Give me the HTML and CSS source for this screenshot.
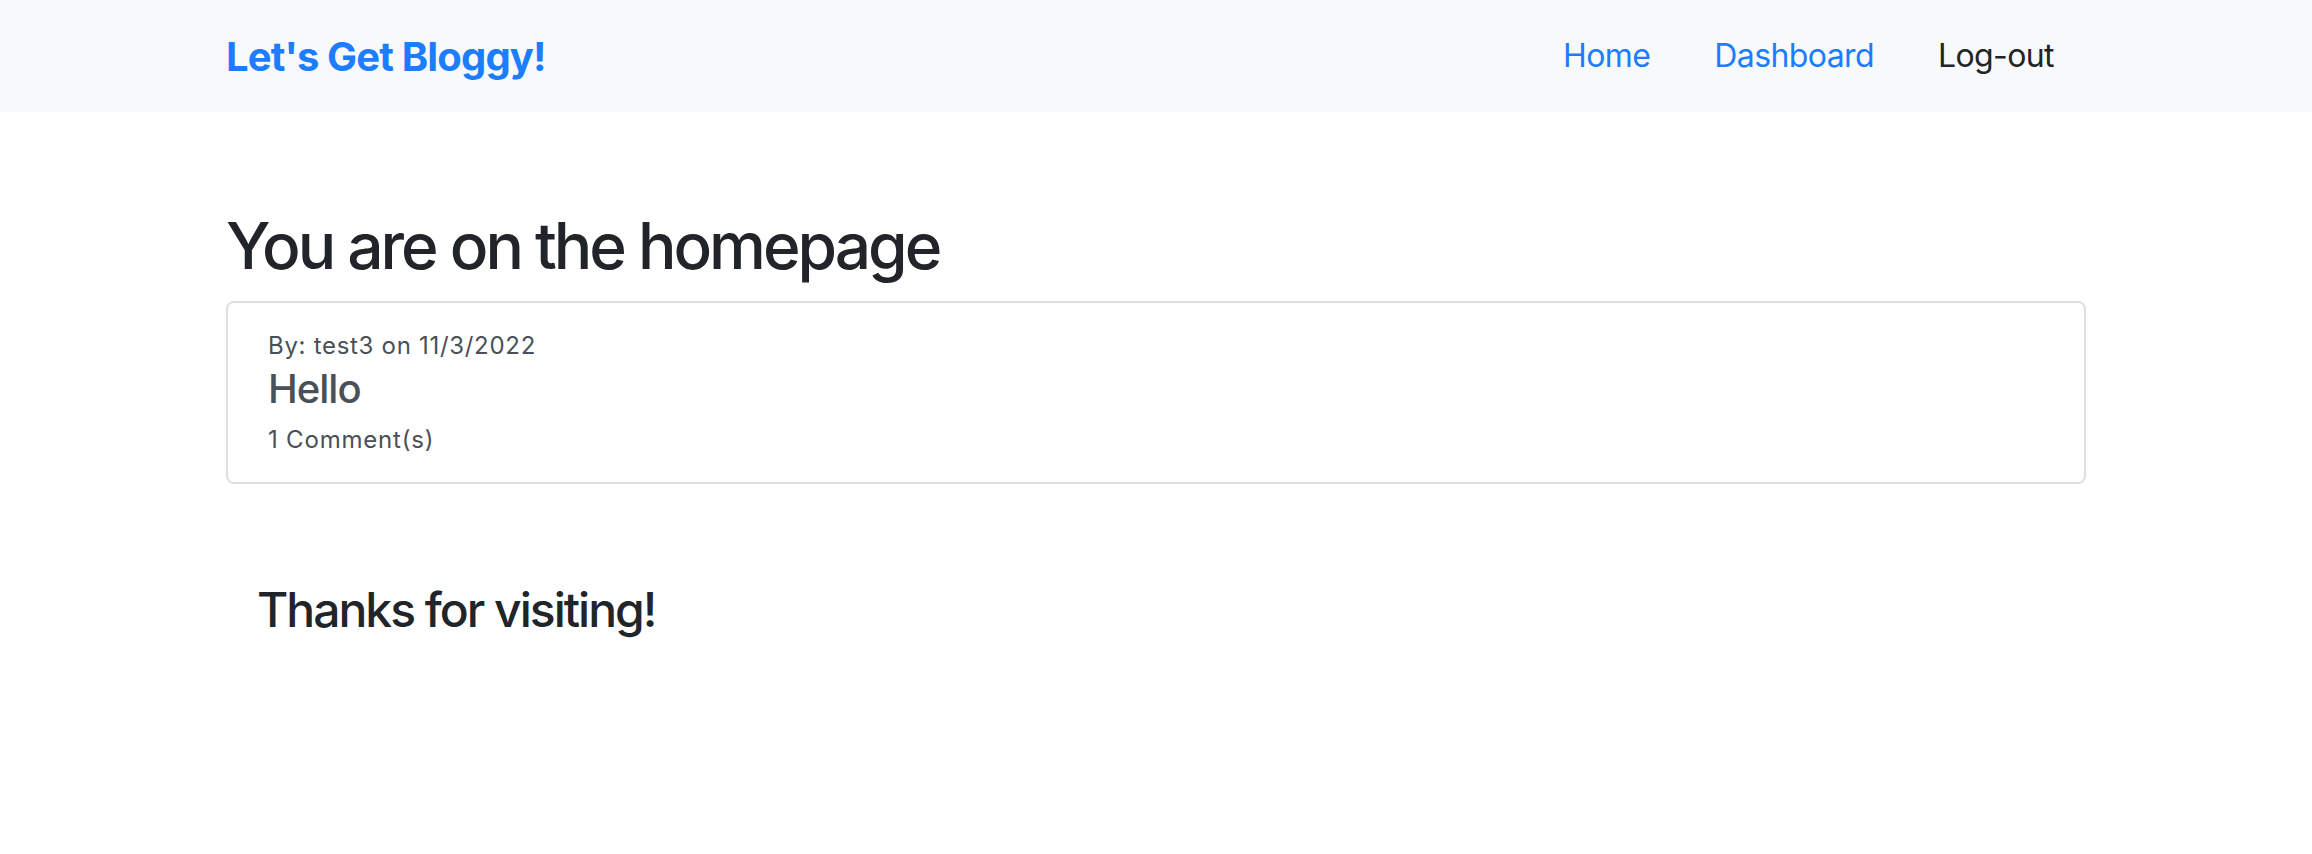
FILE: index.html
```html
<!DOCTYPE html>
<html lang="en">
<head>
<meta charset="utf-8">
<title>Let's Get Bloggy!</title>
<link rel="stylesheet" href="styles.css">
</head>
<body>
<nav class="navbar">
  <div class="container nav-inner">
    <a class="brand" href="#">Let's Get Bloggy!</a>
    <ul class="nav-links">
      <li><a class="nav-link" href="#">Home</a></li>
      <li><a class="nav-link" href="#">Dashboard</a></li>
      <li><a class="nav-link dark" href="#">Log-out</a></li>
    </ul>
  </div>
</nav>
<main class="container main">
  <h2 class="page-title">You are on the homepage</h2>
  <div class="card">
    <div class="card-body">
      <p class="meta">By: test3 on 11/3/2022</p>
      <h5 class="post-title">Hello</h5>
      <p class="comments">1 Comment(s)</p>
    </div>
  </div>
  <footer class="thanks">
    <h4>Thanks for visiting!</h4>
  </footer>
</main>
</body>
</html>
```

FILE: styles.css
```css
* { box-sizing: border-box; }
body {
  margin: 0;
  font-family: Inter, "Noto Sans", "Liberation Sans", sans-serif;
  color: #212529;
  background: #fff;
}
a { text-decoration: none; }
.container {
  width: 1920px;
  margin: 0 auto;
  padding: 0 30px;
}
.navbar {
  background: #f8f9fa;
  height: 112px;
}
.nav-inner {
  height: 100%;
  display: flex;
  align-items: center;
  justify-content: space-between;
}
.brand {
  font-size: 40px;
  font-weight: 700;
  color: #1c7dff;
  letter-spacing: -0.85px;
}
.nav-links {
  list-style: none;
  margin: 0;
  padding: 0;
  display: flex;
}
.nav-link {
  display: block;
  padding: 0 32px;
  font-size: 32px;
  line-height: 48px;
  letter-spacing: -0.6px;
  color: #1c7dff;
}
.nav-link.dark { color: #212529; }
.main { padding-top: 96px; }
.page-title {
  margin: 0 0 16px;
  font-size: 64px;
  font-weight: 500;
  line-height: 1.2;
  letter-spacing: -3px;
}
.card {
  border: 2px solid #dfdfdf;
  border-radius: 8px;
}
.card-body {
  padding: 25px 40px 24px;
  color: #495057;
}
.meta {
  margin: 0;
  font-size: 24px;
  line-height: 36px;
  letter-spacing: 0.7px;
}
.post-title {
  margin: 1px 0 9px;
  font-size: 40px;
  font-weight: 500;
  line-height: 48px;
  letter-spacing: -1px;
}
.comments {
  margin: 0;
  font-size: 24px;
  line-height: 36px;
  letter-spacing: 0.8px;
}
.thanks {
  padding: 97px 31px 0;
}
.thanks h4 {
  margin: 0;
  font-size: 48px;
  font-weight: 500;
  line-height: 1.2;
  letter-spacing: -2px;
}
```
